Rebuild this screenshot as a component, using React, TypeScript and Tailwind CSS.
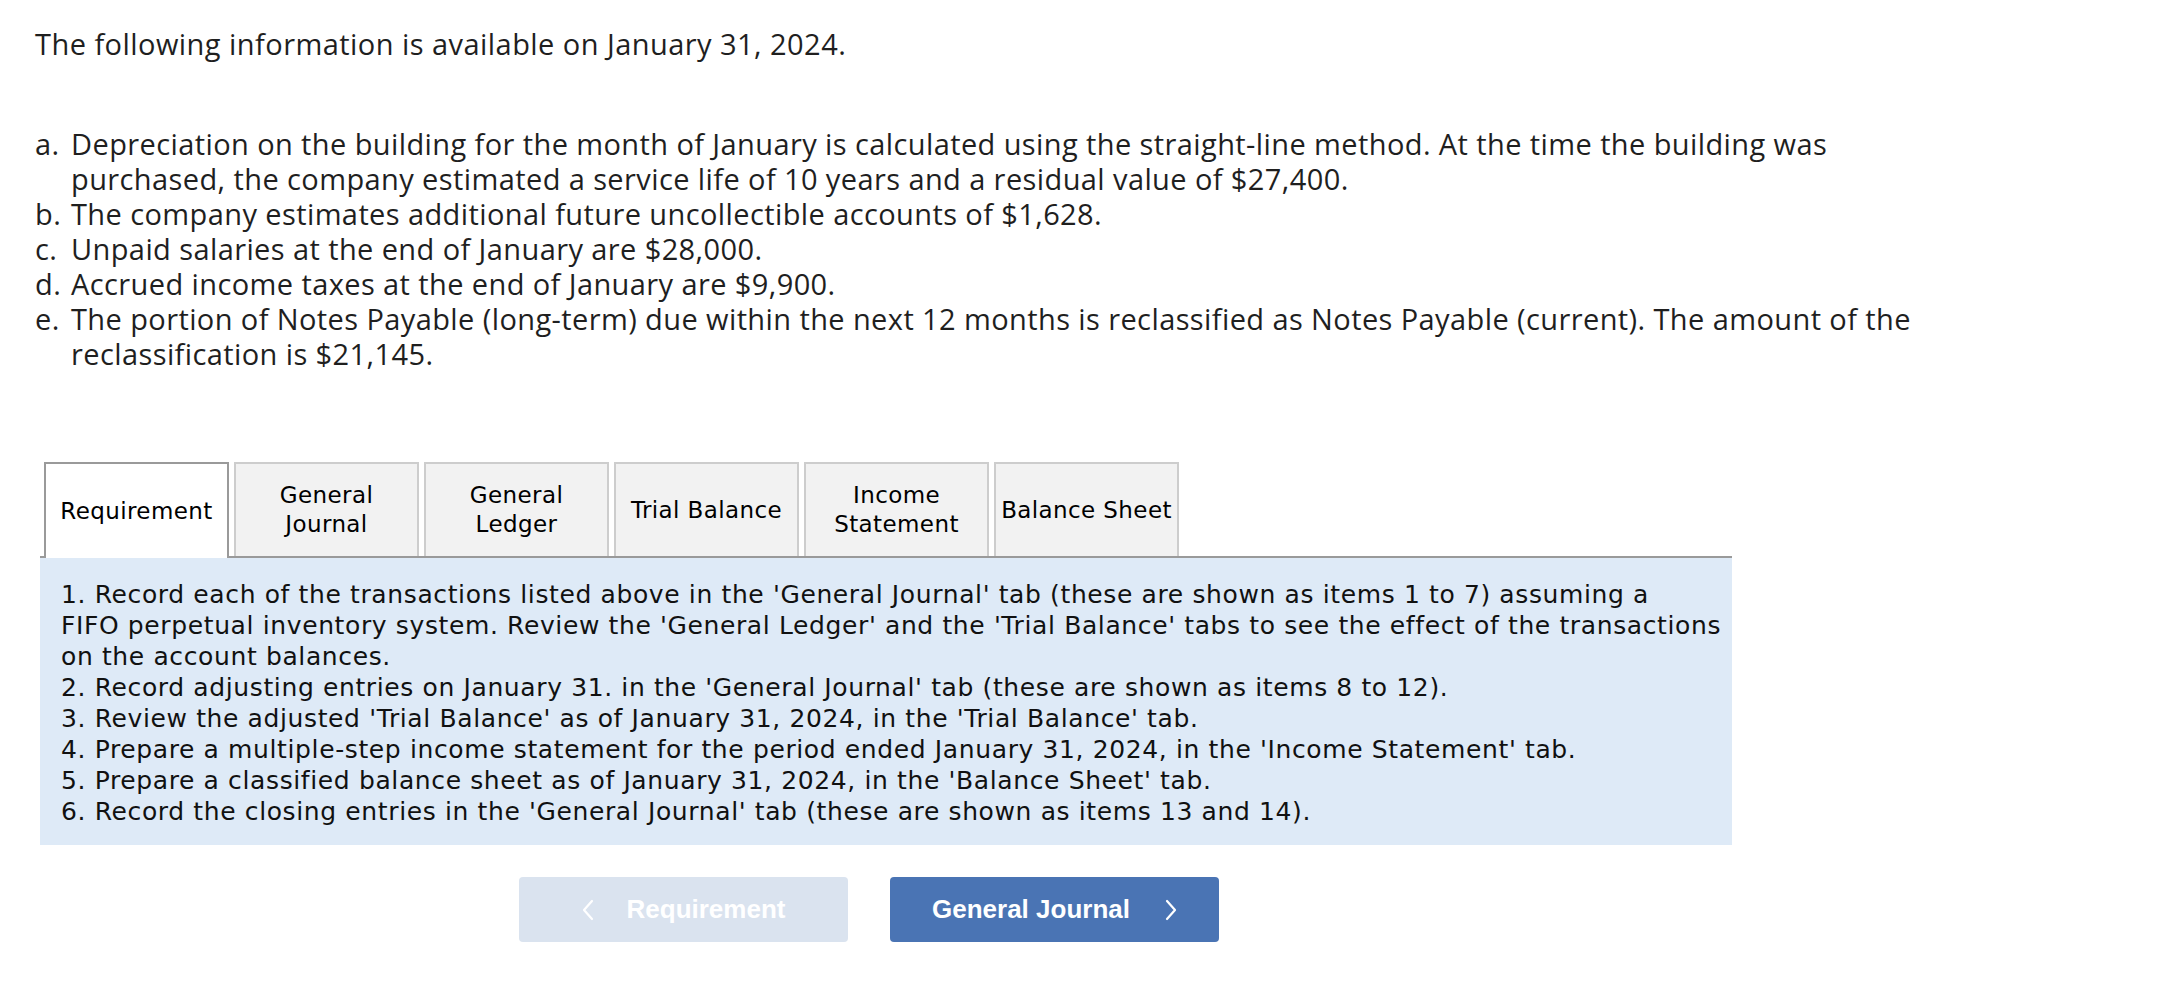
import React from "react";

const items: { label: string; lines: string[] }[] = [
  {
    label: "a.",
    lines: [
      "Depreciation on the building for the month of January is calculated using the straight-line method. At the time the building was",
      "purchased, the company estimated a service life of 10 years and a residual value of $27,400.",
    ],
  },
  { label: "b.", lines: ["The company estimates additional future uncollectible accounts of $1,628."] },
  { label: "c.", lines: ["Unpaid salaries at the end of January are $28,000."] },
  { label: "d.", lines: ["Accrued income taxes at the end of January are $9,900."] },
  {
    label: "e.",
    lines: [
      "The portion of Notes Payable (long-term) due within the next 12 months is reclassified as Notes Payable (current). The amount of the",
      "reclassification is $21,145.",
    ],
  },
];

const instructions: string[] = [
  "1. Record each of the transactions listed above in the 'General Journal' tab (these are shown as items 1 to 7) assuming a",
  "FIFO perpetual inventory system. Review the 'General Ledger' and the 'Trial Balance' tabs to see the effect of the transactions",
  "on the account balances.",
  "2. Record adjusting entries on January 31. in the 'General Journal' tab (these are shown as items 8 to 12).",
  "3. Review the adjusted 'Trial Balance' as of January 31, 2024, in the 'Trial Balance' tab.",
  "4. Prepare a multiple-step income statement for the period ended January 31, 2024, in the 'Income Statement' tab.",
  "5. Prepare a classified balance sheet as of January 31, 2024, in the 'Balance Sheet' tab.",
  "6. Record the closing entries in the 'General Journal' tab (these are shown as items 13 and 14).",
];

const tabs: string[][] = [
  ["Requirement"],
  ["General", "Journal"],
  ["General", "Ledger"],
  ["Trial Balance"],
  ["Income", "Statement"],
  ["Balance Sheet"],
];

function ChevronLeft() {
  return (
    <svg width="12" height="22" viewBox="0 0 12 22" fill="none">
      <path d="M10 2 L2 11 L10 20" stroke="currentColor" strokeWidth="2.2" strokeLinecap="round" strokeLinejoin="round" />
    </svg>
  );
}

function ChevronRight() {
  return (
    <svg width="12" height="22" viewBox="0 0 12 22" fill="none">
      <path d="M2 2 L10 11 L2 20" stroke="currentColor" strokeWidth="2.2" strokeLinecap="round" strokeLinejoin="round" />
    </svg>
  );
}

export default function App() {
  return (
    <div className="min-h-screen bg-white pl-[35px] pt-[26px] text-[#1f1f1f] [font-family:'Open_Sans',Lato,sans-serif]">
      <p className="text-[29px] leading-[35px] tracking-[0.45px]">The following information is available on January 31, 2024.</p>

      <div className="mt-[65px] text-[29px] leading-[35px] tracking-[0.4px]">
        {items.map((it) => (
          <div key={it.label} className="flex whitespace-nowrap">
            <span className="w-[36px] shrink-0">{it.label}</span>
            <span>
              {it.lines.map((l, i) => (
                <div key={i}>{l}</div>
              ))}
            </span>
          </div>
        ))}
      </div>

      <div className="ml-[5px] mt-[91px] w-[1692px] [font-family:'DejaVu_Sans',Verdana,sans-serif] text-black">
        <div className="flex gap-[5px] border-b-2 border-[#9a9a9a] pl-[4px]">
          {tabs.map((t, idx) =>
            idx === 0 ? (
              <div
                key={idx}
                className="relative z-10 -mb-[2px] flex h-[96px] w-[185px] items-center justify-center border-2 border-b-0 border-[#9a9a9a] bg-white text-center text-[23px] leading-[29px] tracking-[0.4px]"
              >
                {t.map((l) => (
                  <div key={l}>{l}</div>
                ))}
              </div>
            ) : (
              <div
                key={idx}
                className="flex h-[94px] w-[185px] flex-col items-center justify-center border-2 border-b-0 border-[#cdcdcd] bg-[#f2f2f2] text-center text-[23px] leading-[29px] tracking-[0.4px]"
              >
                {t.map((l) => (
                  <div key={l}>{l}</div>
                ))}
              </div>
            )
          )}
        </div>
        <div className="bg-[#deeaf7] px-[21px] pb-[18px] pt-[21px] text-[25px] leading-[31px] tracking-[0.62px] text-[#111]">
          {instructions.map((l, i) => (
            <div key={i} className="whitespace-nowrap">
              {l}
            </div>
          ))}
        </div>
      </div>

      <div className="mt-[32px] flex gap-[42px] pl-[484px] [font-family:'Liberation_Sans',Arial,sans-serif]">
        <button className="flex h-[65px] w-[329px] items-center justify-center gap-[33px] rounded-[4px] bg-[#dae3ef] text-[26px] font-bold text-white">
          <ChevronLeft />
          <span>Requirement</span>
        </button>
        <button className="flex h-[65px] w-[329px] items-center justify-center gap-[35px] rounded-[4px] bg-[#4a74b4] text-[26px] font-bold text-white">
          <span>General Journal</span>
          <ChevronRight />
        </button>
      </div>
    </div>
  );
}
